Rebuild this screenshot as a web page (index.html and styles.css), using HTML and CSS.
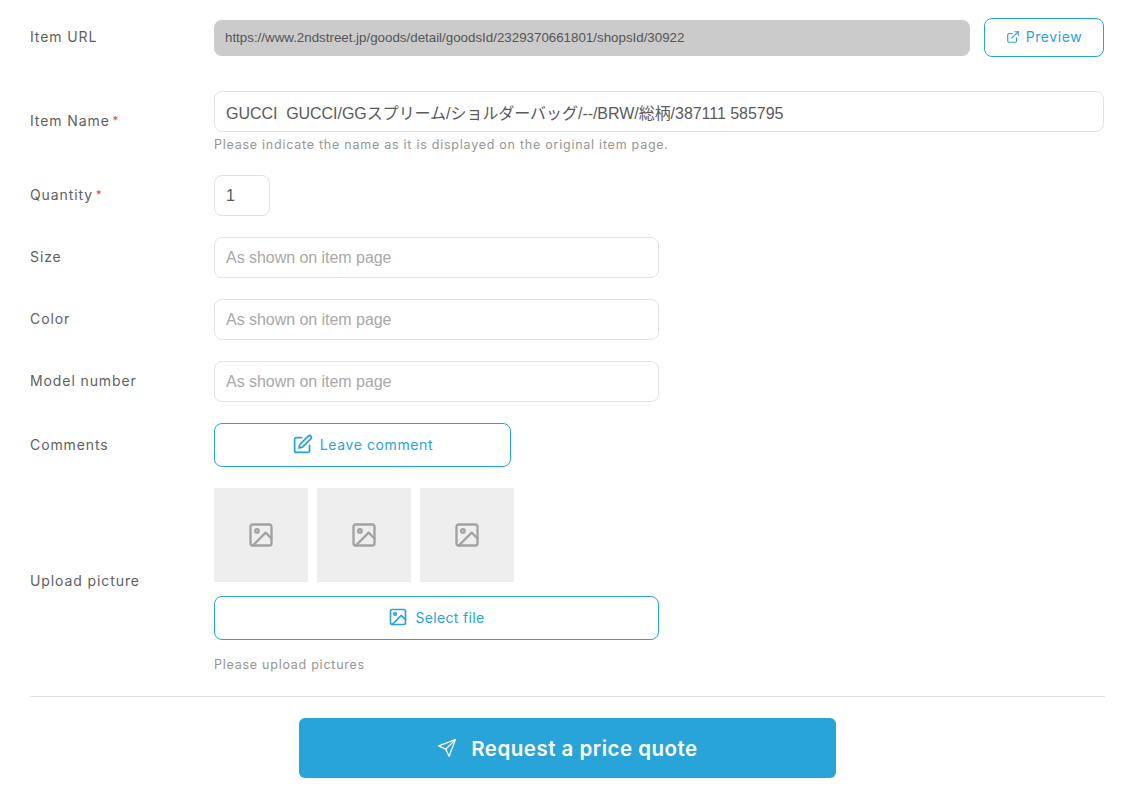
FILE: index.html
```html
<!DOCTYPE html>
<html lang="en">
<head>
  <meta charset="UTF-8">
  <meta name="viewport" content="width=device-width, initial-scale=1.0">
  <title>Request a price quote</title>
  <link rel="stylesheet" href="styles.css">
</head>
<body>
  <form class="quote-form">
    <div class="row row-url">
      <label class="label">Item URL</label>
      <div class="field url-field">
        <div class="url-box">https://www.2ndstreet.jp/goods/detail/goodsId/2329370661801/shopsId/30922</div>
        <button type="button" class="btn btn-preview">
          <svg class="icon-sm" viewBox="0 0 24 24"><path d="M18 13.5V19a2 2 0 0 1-2 2H5a2 2 0 0 1-2-2V8a2 2 0 0 1 2-2h5.5"/><path d="M15 3h6v6"/><path d="M10 14 21 3"/></svg>
          Preview
        </button>
      </div>
    </div>

    <div class="row row-name">
      <label class="label">Item Name<span class="req">*</span></label>
      <div class="field">
        <input class="input" type="text" value="GUCCI  GUCCI/GGスプリーム/ショルダーバッグ/--/BRW/総柄/387111 585795">
        <p class="hint hint-name">Please indicate the name as it is displayed on the original item page.</p>
      </div>
    </div>

    <div class="row">
      <label class="label">Quantity<span class="req">*</span></label>
      <div class="field"><input class="input input-qty" type="text" value="1"></div>
    </div>

    <div class="row">
      <label class="label">Size</label>
      <div class="field"><input class="input input-mid" type="text" placeholder="As shown on item page"></div>
    </div>

    <div class="row">
      <label class="label">Color</label>
      <div class="field"><input class="input input-mid" type="text" placeholder="As shown on item page"></div>
    </div>

    <div class="row">
      <label class="label">Model number</label>
      <div class="field"><input class="input input-mid" type="text" placeholder="As shown on item page"></div>
    </div>

    <div class="row">
      <label class="label">Comments</label>
      <div class="field">
        <button type="button" class="btn btn-comment">
          <svg class="icon-md" viewBox="0 0 24 24"><path d="M11 4H5a2 2 0 0 0-2 2v13a2 2 0 0 0 2 2h13a2 2 0 0 0 2-2v-6"/><path d="M18.5 2.5a2.1 2.1 0 0 1 3 3L12 15l-4 1 1-4z"/></svg>
          Leave comment
        </button>
      </div>
    </div>

    <div class="row">
      <label class="label">Upload picture</label>
      <div class="field">
        <div class="thumbs">
          <div class="thumb"><svg class="icon-pic" viewBox="0 0 24 24"><rect x="3" y="3" width="18" height="18" rx="2"/><circle cx="8.5" cy="8.5" r="1.5"/><path d="M21 15l-5-5L5 21"/></svg></div>
          <div class="thumb"><svg class="icon-pic" viewBox="0 0 24 24"><rect x="3" y="3" width="18" height="18" rx="2"/><circle cx="8.5" cy="8.5" r="1.5"/><path d="M21 15l-5-5L5 21"/></svg></div>
          <div class="thumb"><svg class="icon-pic" viewBox="0 0 24 24"><rect x="3" y="3" width="18" height="18" rx="2"/><circle cx="8.5" cy="8.5" r="1.5"/><path d="M21 15l-5-5L5 21"/></svg></div>
        </div>
        <button type="button" class="btn btn-file">
          <svg class="icon-file" viewBox="0 0 24 24"><rect x="3" y="3" width="18" height="18" rx="2"/><circle cx="8.5" cy="8.5" r="1.5"/><path d="M21 15l-5-5L5 21"/></svg>
          Select file
        </button>
        <p class="hint hint-upload">Please upload pictures</p>
      </div>
    </div>

    <hr class="divider">

    <div class="submit-wrap">
      <button type="button" class="btn-submit">
        <svg class="icon-send" viewBox="0 0 24 24"><path d="M22 2 2 9.5l8.5 4L14.5 22z"/><path d="M22 2 10.5 13.5"/></svg>
        Request a price quote
      </button>
    </div>
  </form>
</body>
</html>
```

FILE: styles.css
```css
:root {
  --blue: #29a4d9;
  --border: #e2e2e2;
  --text: #5a5a5a;
  --hint: #969696;
}
* { box-sizing: border-box; }
body {
  margin: 0;
  font-family: Inter, "Open Sans", sans-serif;
  background: white;
  color: var(--text);
}
.quote-form { padding: 18px 35px 0 30px; }

.row { display: flex; align-items: center; margin-bottom: 21px; }
.row-url { margin-bottom: 34px; }
.row-name { margin-bottom: 23px; }
.label {
  width: 184px;
  flex: none;
  padding-bottom: 2px;
  font-size: 14px;
  letter-spacing: 0.9px;
  color: #5f5f5f;
}
.req { color: #e0393e; font-size: 11px; margin-left: 3px; vertical-align: 2px; }
.field { flex: 1; min-width: 0; }

.url-field { display: flex; align-items: center; justify-content: space-between; }
.url-box {
  width: 756px;
  height: 36px;
  line-height: 36px;
  padding-left: 11px;
  background: #cbcbcb;
  border-radius: 8px;
  font-family: "Liberation Sans", Arial, sans-serif;
  font-size: 13.33px;
  color: #555;
}

.input {
  display: block;
  width: 100%;
  height: 41px;
  padding: 0 11px;
  border: 1px solid var(--border);
  border-radius: 8px;
  background: white;
  font-family: "Liberation Sans", "Noto Sans CJK JP", Arial, sans-serif;
  font-size: 16px;
  letter-spacing: -0.04px;
  color: var(--text);
  outline: none;
}
.input::placeholder { color: #a8a8a8; opacity: 1; }
.input-qty { width: 56px; }
.input-mid { width: 445px; }

.hint { margin: 0; font-size: 12.5px; line-height: 14px; letter-spacing: 0.75px; color: var(--hint); }
.hint-name { margin-top: 6px; }
.hint-upload { margin-top: 18px; height: 17px; }

.btn {
  display: flex;
  align-items: center;
  justify-content: center;
  padding: 0 0 2px;
  background: white;
  border: 1px solid var(--blue);
  border-radius: 8px;
  color: var(--blue);
  font-family: Inter, "Open Sans", sans-serif;
  font-size: 14px;
  letter-spacing: 0.6px;
  cursor: pointer;
}
.btn svg, .btn-submit svg { fill: none; stroke: currentColor; stroke-linecap: round; stroke-linejoin: round; }
.btn-preview { width: 120px; height: 39px; gap: 6px; }
.btn-comment { width: 297px; height: 44px; gap: 7px; }
.btn-file { width: 445px; height: 44px; gap: 7px; letter-spacing: 0.35px; }

.icon-sm { width: 14px; height: 14px; stroke-width: 2; }
.icon-md { width: 21px; height: 21px; stroke-width: 2; }
.icon-file { width: 20px; height: 20px; stroke-width: 2; }

.thumbs { display: flex; gap: 9px; margin-bottom: 14px; }
.thumb {
  width: 94px;
  height: 94px;
  background: #eee;
  display: flex;
  align-items: center;
  justify-content: center;
}
.icon-pic { width: 28px; height: 28px; fill: none; stroke: #a2a2a2; stroke-width: 2; stroke-linecap: round; stroke-linejoin: round; }

.divider { margin: 0 -1px 21px 0; border: none; border-top: 1px solid var(--border); }
.submit-wrap { display: flex; padding-left: 269px; }
.btn-submit {
  width: 537px;
  height: 60px;
  display: flex;
  align-items: center;
  justify-content: center;
  gap: 14px;
  border: none;
  border-radius: 6px;
  background: var(--blue);
  color: white;
  font-family: Inter, "Open Sans", sans-serif;
  font-size: 20.5px;
  font-weight: 600;
  letter-spacing: 0.5px;
  cursor: pointer;
}
.icon-send { width: 20px; height: 20px; stroke-width: 1.5; }
```
